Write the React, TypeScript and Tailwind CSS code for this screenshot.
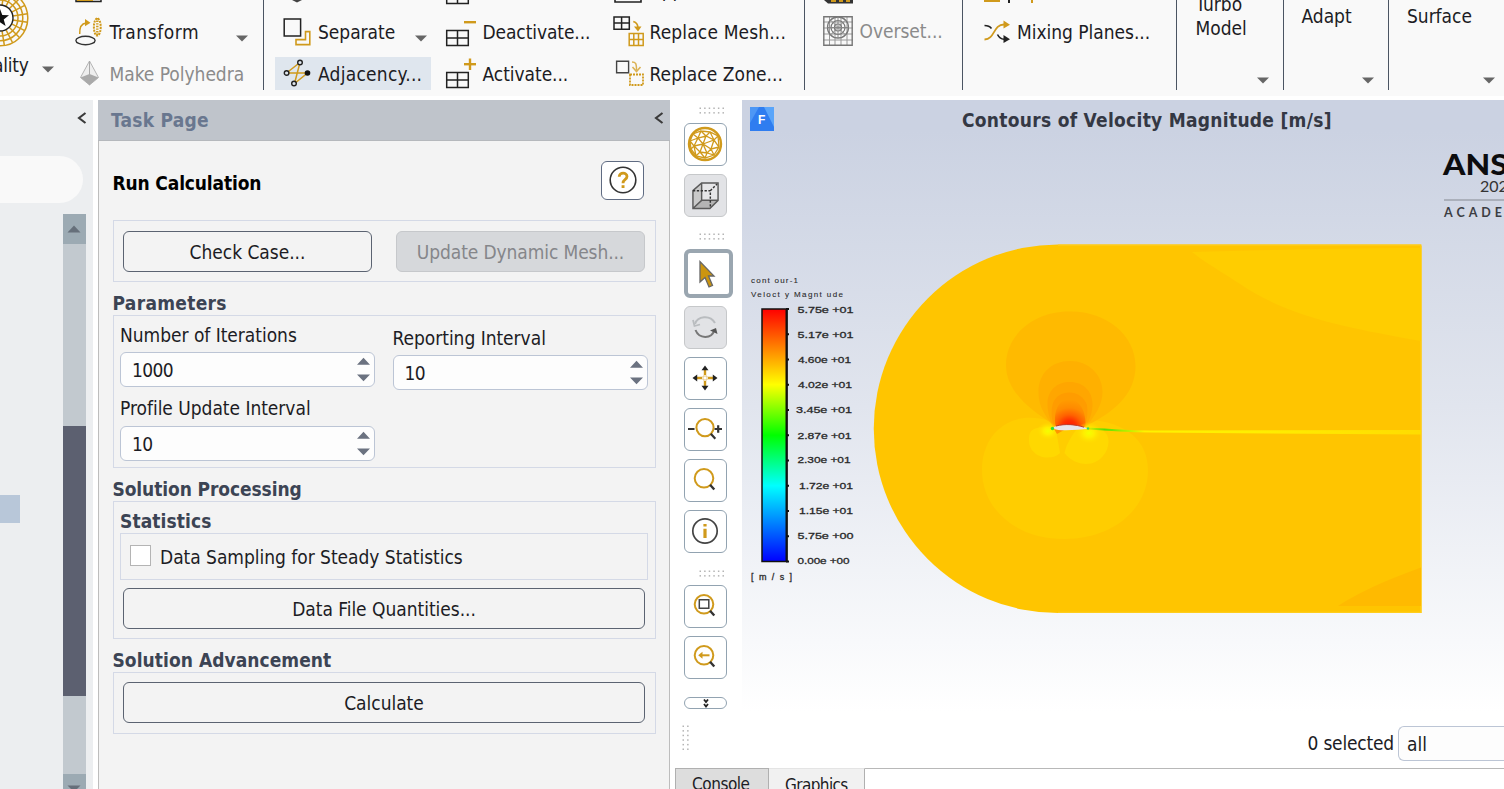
import React from "react";

const GOLD = "#d09a1c";

function Caret({ className = "" }: { className?: string }) {
  return (
    <svg className={`shrink-0 ${className}`} width="12" height="7" viewBox="0 0 12 7">
      <path d="M0 0.5H12L6 6.5Z" fill="#666" />
    </svg>
  );
}

function TableIcon({ mark }: { mark?: "plus" | "minus" }) {
  return (
    <svg width="32" height="32" viewBox="0 0 32 32" fill="none">
      <path d="M1.7 14.5H23.3V29.5H1.7ZM12.5 14.5V29.5M1.7 22H23.3" stroke="#222" strokeWidth="1.5" />
      {mark && <path d="M19 6.2H31" stroke={GOLD} strokeWidth="2.4" />}
      {mark === "plus" && <path d="M25 0.5V12" stroke={GOLD} strokeWidth="2.4" />}
    </svg>
  );
}

function QualityIcon() {
  return (
    <svg width="60" height="60" viewBox="-30 -30 60 60" fill="none" className="shrink-0">
      <g stroke={GOLD} strokeWidth="1.5">
        <circle r="27.8" />
        <circle r="22.8" />
        <circle r="18" />
        {Array.from({ length: 20 }, (_, i) => (
          <path key={i} d="M13 0H27.8" transform={`rotate(${i * 18 + 9})`} />
        ))}
      </g>
      <circle r="13" fill="#fff" stroke="#222" strokeWidth="1.4" />
      <path d="M0-9L2.3-3L9-2.7L3.7 1.5L5.6 8L0 4.3L-5.6 8L-3.7 1.5L-9-2.7L-2.3-3Z" fill="#111" />
    </svg>
  );
}

function TransformIcon() {
  return (
    <svg width="28" height="30" viewBox="0 0 28 30" fill="none">
      <ellipse cx="10.5" cy="23.5" rx="9.6" ry="4.2" stroke="#333" strokeWidth="1.4" />
      <path d="M4.7 17C4.5 11 6.500 6.500 11 6" stroke={GOLD} strokeWidth="1.5" />
      <path d="M10 2L15.5 5.8L10 9.2Z" fill={GOLD} />
      <ellipse cx="22.3" cy="10" rx="3.4" ry="8.6" stroke={GOLD} strokeWidth="2" strokeDasharray="2 1" />
      <path d="M22.3 1V19" stroke={GOLD} strokeWidth="2.4" strokeDasharray="1.4 1.2" />
    </svg>
  );
}

function PolyIcon() {
  return (
    <svg width="28" height="30" viewBox="0 0 28 30">
      <path d="M14.5 2L5.5 18.500L14.5 26L23.5 18.500Z" fill="#eee" stroke="#b5b5b5" />
      <path d="M5.5 18.500L14.5 15L23.5 18.500L14.5 26Z" fill="#aaa" />
      <path d="M14.5 2V26" stroke="#aaa" />
    </svg>
  );
}

function SeparateIcon() {
  return (
    <svg width="30" height="30" viewBox="0 0 30 30" fill="none">
      <path d="M1.2 2H17.600V19H1.2Z" stroke="#222" strokeWidth="1.5" />
      <path d="M22.500 14.600H26.800V27.600H13V22.600H22.500Z" stroke={GOLD} strokeWidth="1.6" />
    </svg>
  );
}

function AdjacencyIcon() {
  return (
    <svg width="30" height="30" viewBox="0 0 30 30" fill="none">
      <path d="M3.5 14L17 3.500L11.5 24.500L24.5 14H3.5" stroke={GOLD} strokeWidth="1.5" />
      <g fill="#dfe6ee" stroke="#222" strokeWidth="1.4">
        <circle cx="3.6" cy="14" r="2.3" />
        <circle cx="17" cy="3.500" r="2.3" />
        <circle cx="11" cy="24.500" r="2.3" />
      </g>
      <circle cx="24.5" cy="14" r="2.8" fill="#111" />
    </svg>
  );
}

function ReplaceMeshIcon() {
  return (
    <svg width="32" height="32" viewBox="0 0 32 32" fill="none">
      <path d="M1 1H16.3V13.3H1ZM8.6 1V13.3M1 7H16.3" stroke="#222" strokeWidth="1.5" />
      <path d="M16.2 17.5H30.2V29.5H16.2ZM20.8 17.5V29.5M25.5 17.5V29.5M16.2 23.5H30.2" stroke={GOLD} strokeWidth="1.5" />
      <path d="M20.3 5.5C23.5 6.5 25 8.5 25 12" stroke={GOLD} strokeWidth="1.7" />
      <path d="M21 10.5L25 15.5L28.5 10.5Z" fill={GOLD} />
    </svg>
  );
}

function ReplaceZoneIcon() {
  return (
    <svg width="32" height="32" viewBox="0 0 32 32" fill="none">
      <path d="M3.6 5.2H15.6V16.7H3.6Z" stroke="#444" strokeWidth="1.4" />
      <path d="M17 18.500H30V29H17Z" stroke={GOLD} strokeWidth="1.8" strokeDasharray="2 1" />
      <path d="M19 6C22.5 6 23.5 7 23.5 14" stroke="#dbb254" strokeWidth="1.5" />
      <path d="M19.5 11L23.5 15.5L27.5 11" stroke="#dbb254" strokeWidth="1.6" />
    </svg>
  );
}

function OversetIcon() {
  return (
    <svg width="30" height="30" viewBox="0 0 30 30" fill="none">
      <g stroke="#999" strokeWidth="1">
        <path d="M6.5 0V30M12 0V30M18 0V30M24 0V30M0 6H30M0 12H30M0 18H30M0 24H30" />
      </g>
      <path d="M0.8 0.8H29.2V29.2H0.8Z" stroke="#777" strokeWidth="1.4" />
      <circle cx="15" cy="11.5" r="10.5" stroke="#777" strokeWidth="1.3" />
      <circle cx="15" cy="11.5" r="7" stroke="#777" strokeWidth="1.2" />
      <circle cx="15" cy="11.5" r="3.5" stroke="#777" strokeWidth="1.2" />
      <path d="M7.5 4L22.5 19M22.5 4L7.5 19M15 1V22M4.5 11.5H25.5" stroke="#888" />
    </svg>
  );
}

function MixingIcon() {
  return (
    <svg width="28" height="28" viewBox="0 0 28 28" fill="none">
      <path d="M0.5 21.5C11 21.5 9 6.5 20 6.5" stroke={GOLD} strokeWidth="1.8" />
      <path d="M19.5 2.5L26 6.8L19.5 10.5Z" fill={GOLD} />
      <path d="M0.5 7.5C4 7.5 6 8.5 7.5 10.5M13.5 16.5C15 19.5 17 21 20 21.3" stroke="#222" strokeWidth="1.6" />
      <path d="M19.5 17L26 21.3L19.5 25Z" fill="#222" />
    </svg>
  );
}

function RibbonItem({
  icon,
  label,
  iconClass,
  labelClass = "",
  className = "",
  caret,
}: {
  icon: React.ReactNode;
  label: string;
  iconClass: string;
  labelClass?: string;
  className?: string;
  caret?: string;
}) {
  return (
    <div className={`flex h-[42px] shrink-0 items-center ${className}`}>
      <span className={`flex shrink-0 ${iconClass}`}>{icon}</span>
      <span className={`whitespace-nowrap ${labelClass}`}>{label}</span>
      {caret && <Caret className={`mt-[13px] ${caret}`} />}
    </div>
  );
}

function BigItem({ lines, className, caret }: { lines: string[]; className: string; caret: string }) {
  return (
    <div className={`flex h-[90px] shrink-0 flex-col justify-between border-l border-[#4b5563] ${className}`}>
      <div className="flex flex-col">
        {lines.map((l) => (
          <span key={l} className="h-6 leading-6">
            {l}
          </span>
        ))}
      </div>
      <Caret className={`mb-[6px] ${caret}`} />
    </div>
  );
}

function Ribbon() {
  return (
    <header className="flex h-[96px] shrink-0 overflow-hidden bg-[#f9f9f9]">
      <div className="flex w-[75px] shrink-0 flex-col overflow-hidden">
        <div className="-mt-[12px] -ml-[30px]">
          <QualityIcon />
        </div>
        <div className="mt-[5px] flex items-center">
          <span className="-ml-[7px] leading-6 tracking-[-0.2px]">ality</span>
          <Caret className="ml-[13px] mt-[9px]" />
        </div>
      </div>

      <div className="flex h-[95px] w-[188px] shrink-0 flex-col justify-end overflow-hidden">
        <RibbonItem
          icon={
            <svg width="28" height="28" viewBox="0 0 28 28">
              <path d="M1 4H26V25.5H1Z" fill="#fff" stroke="#222" strokeWidth="1.5" />
              <path d="M2 20H18V25H2Z" fill={GOLD} />
            </svg>
          }
          iconClass="w-[35px]"
          label=""
        />
        <RibbonItem icon={<TransformIcon />} iconClass="w-[34.5px]" label="Transform" labelClass="tracking-[0.55px]" caret="ml-[37px]" />
        <RibbonItem icon={<PolyIcon />} iconClass="w-[34.5px]" label="Make Polyhedra" className="text-[#8b8b8b]" />
      </div>

      <div className="flex h-[90px] w-[168px] shrink-0 flex-col overflow-hidden border-l border-[#4b5563]">
        <div className="h-[11px] pl-[27px]">
          <svg width="12" height="3" viewBox="0 0 12 3">
            <path d="M1 0H11L6 2.5Z" fill="#444" />
          </svg>
        </div>
        <RibbonItem
          icon={<SeparateIcon />}
          iconClass="w-[35px]"
          className="pl-[19px]"
          label="Separate"
          caret="ml-[20px]"
        />
        <div className="mt-1 ml-[11px] flex h-[33px] w-[156px] shrink-0 items-center bg-[#dfe6ee] pl-[8px]">
          <span className="flex w-[35px] shrink-0">
            <AdjacencyIcon />
          </span>
          <span className="tracking-[0.25px]">Adjacency...</span>
        </div>
      </div>

      <div className="flex h-[95px] w-[167px] shrink-0 flex-col justify-end overflow-hidden pl-[14px]">
        <RibbonItem icon={<TableIcon />} iconClass="w-[37.5px]" label="" />
        <RibbonItem icon={<TableIcon mark="minus" />} iconClass="mt-[-1px] w-[37.5px]" label="Deactivate..." labelClass="tracking-[-0.1px]" />
        <RibbonItem icon={<TableIcon mark="plus" />} iconClass="w-[37.5px]" label="Activate..." labelClass="tracking-[-0.05px]" />
      </div>

      <div className="flex h-[95px] w-[206px] shrink-0 flex-col justify-end overflow-hidden pl-[15px]">
        <RibbonItem
          icon={
            <svg width="30" height="24" viewBox="0 0 30 24">
              <path d="M2 2H28V21H2Z" fill="none" stroke="#222" strokeWidth="1.6" />
            </svg>
          }
          iconClass="mt-[5px] w-[37px]"
          label="Append..."
        />
        <RibbonItem icon={<ReplaceMeshIcon />} iconClass="mt-[-1px] w-[36.5px]" label="Replace Mesh..." labelClass="tracking-[0.15px]" />
        <RibbonItem icon={<ReplaceZoneIcon />} iconClass="mt-[-5px] w-[36.5px]" label="Replace Zone..." labelClass="tracking-[0.05px]" />
      </div>

      <div className="flex h-[90px] w-[158px] shrink-0 flex-col border-l border-[#4b5563] pl-[18px]">
        <div className="h-[10px]">
          <svg width="32" height="5" viewBox="0 0 32 5">
            <path d="M1 0H30V3.5H5Z" fill="#333" />
            <path d="M8 0H13V2H8ZM16 0H20V2H16ZM23 0H27V2H23Z" fill={GOLD} />
          </svg>
        </div>
        <RibbonItem icon={<OversetIcon />} iconClass="w-[36.5px]" label="Overset..." className="text-[#8b8b8b]" />
      </div>

      <div className="flex h-[90px] w-[214px] shrink-0 flex-col border-l border-[#4b5563] pl-[21px]">
        <div className="h-[11px]">
          <svg width="60" height="5" viewBox="0 0 60 5">
            <path d="M0 0H16V2H0Z" fill={GOLD} />
            <path d="M24 0H26V3H24Z" fill="#222" />
            <path d="M47 0H49V3H47Z" fill={GOLD} />
          </svg>
        </div>
        <RibbonItem icon={<MixingIcon />} iconClass="w-[33px]" label="Mixing Planes..." />
      </div>

      <BigItem lines={["Turbo", "Model"]} className="w-[107px] pl-[18.5px] [&>div]:-mt-[8px]" caret="ml-[61px]" />
      <BigItem lines={["Adapt"]} className="w-[105px] pl-[17.5px] [&>div]:mt-[4px]" caret="ml-[60px]" />
      <BigItem lines={["Surface"]} className="w-[120px] pl-[18px] [&>div]:mt-[4px]" caret="ml-[76px]" />
    </header>
  );
}

function ChevronLeft() {
  return (
    <svg width="10" height="12" viewBox="0 0 10 12" fill="none">
      <path d="M8.5 1L2 6L8.5 11" stroke="#3a3a3a" strokeWidth="2.1" />
    </svg>
  );
}

function Outline() {
  return (
    <aside className="flex w-[93px] shrink-0 flex-col bg-[#eceef0]">
      <div className="flex h-[56px] justify-end pr-[6px] pt-[12px]">
        <ChevronLeft />
      </div>
      <div className="h-[47px] w-[83px] shrink-0 rounded-r-full bg-[#f9f9f9]" />
      <div className="mt-[11px] flex min-h-0 flex-1">
        <div className="w-[63px] pt-[281px]">
          <div className="h-7 w-[19.5px] bg-[#b8c7d9]" />
        </div>
        <div className="flex w-[22.5px] flex-col bg-[#c2c9cf]">
          <div className="flex h-[30px] items-center justify-center bg-[#9caab3]">
            <svg width="14" height="8" viewBox="0 0 14 8">
              <path d="M0.5 7.5L7 0.5L13.5 7.5Z" fill="#666f7a" />
            </svg>
          </div>
          <div className="mt-[182px] h-[270px] bg-[#5c6070]" />
          <div className="mt-[78px] flex flex-1 items-end justify-center bg-[#9caab3]">
            <svg width="14" height="4" viewBox="0 0 14 4">
              <path d="M0.5 0.5H13.5L10 4H4Z" fill="#666f7a" />
            </svg>
          </div>
        </div>
      </div>
    </aside>
  );
}

function Spin({ value }: { value: string }) {
  return (
    <div className="flex h-[35px] w-[255px] items-center justify-between rounded-[6px] border-[1.5px] border-[#bcc5d5] bg-[#fdfdfd] pl-[11px] pr-[4px]">
      <span className="pt-[1px] tracking-[-0.6px]">{value}</span>
      <svg width="13" height="25" viewBox="0 0 13 25">
        <path d="M0 7.8L6.5 0.8L13 7.8ZM0 17.5H13L6.5 24.2Z" fill="#6b7280" />
      </svg>
    </div>
  );
}

function PushButton({ label, className = "" }: { label: string; className?: string }) {
  return (
    <div className={`flex h-[41px] items-center justify-center rounded-[6px] border-[1.5px] pt-[1px] ${className}`}>
      {label}
    </div>
  );
}

function Heading({ children, className = "" }: { children: React.ReactNode; className?: string }) {
  return <h3 className={`font-bold leading-6 whitespace-nowrap text-[#3c4454] ${className}`}>{children}</h3>;
}

function TaskPage() {
  return (
    <section className="ml-[5px] flex w-[572px] shrink-0 flex-col border-x border-[#bdbdbd] bg-[#f3f3f3]">
      <div className="-mx-px flex h-[41px] shrink-0 items-center justify-between border-b border-[#b5b8bc] bg-[#bfc4cb] pl-[13px] pr-[6px]">
        <span className="font-bold tracking-[0.25px] text-[#69778f]">Task Page</span>
        <span className="mb-1">
          <ChevronLeft />
        </span>
      </div>
      <div className="flex flex-col pl-[13.5px] pr-[13.5px]">
        <div className="mt-[19px] flex h-10 items-center justify-between pr-[11.5px]">
          <h2 className="pt-[6px] font-bold tracking-[-0.15px] text-black">Run Calculation</h2>
          <div className="flex h-[39px] w-[43px] items-center justify-center rounded-[6px] border-[1.5px] border-[#5f6b82] bg-white">
            <svg width="28" height="28" viewBox="0 0 28 28" fill="none">
              <circle cx="14" cy="14" r="12.8" stroke="#333" strokeWidth="1.6" />
              <path d="M10.2 10.8C10.2 6 18 6 18 10.6C18 13.6 14 13.2 14 17.3" stroke={GOLD} strokeWidth="2.8" />
              <path d="M12.6 19.2H15.5V22H12.6Z" fill={GOLD} />
            </svg>
          </div>
        </div>

        <div className="mt-[20px] flex h-[62px] justify-between border-[1.5px] border-[#d4d9e6] px-[9.5px] pt-[9.5px]">
          <PushButton label="Check Case..." className="w-[249px] border-[#5b6371]" />
          <PushButton
            label="Update Dynamic Mesh..."
            className="w-[249px] border-[#c6c8cb] bg-[#d6d8db] tracking-[-0.1px] text-[#85868a]"
          />
        </div>

        <Heading className="mt-[9px] tracking-[0.3px]">Parameters</Heading>
        <div className="flex h-[153px] justify-between border-[1.5px] border-[#d4d9e6] pr-[7px] pl-[6.5px]">
          <div className="flex flex-col">
            <span className="mt-[7px] leading-6">Number of Iterations</span>
            <div className="mt-[5px]">
              <Spin value="1000" />
            </div>
            <span className="mt-[9px] leading-6">Profile Update Interval</span>
            <div className="mt-[6px]">
              <Spin value="10" />
            </div>
          </div>
          <div className="flex flex-col">
            <span className="mt-[10px] leading-6">Reporting Interval</span>
            <div className="mt-[5px]">
              <Spin value="10" />
            </div>
          </div>
        </div>

        <Heading className="mt-[9px] tracking-[-0.1px]">Solution Processing</Heading>
        <div className="flex h-[138px] flex-col border-[1.5px] border-[#d4d9e6] px-[6.5px]">
          <Heading className="mt-[7px] tracking-[0.1px]">Statistics</Heading>
          <div className="flex h-[47px] items-center gap-[9px] border-[1.5px] border-[#d4d9e6] pl-[9px]">
            <span className="mb-[3px] h-[21px] w-[21px] border-[1.5px] border-[#b4b4b4] bg-white" />
            <span className="pt-[1px]">Data Sampling for Steady Statistics</span>
          </div>
          <PushButton label="Data File Quantities..." className="mx-[3px] mt-[8px] border-[#5b6371]" />
        </div>

        <Heading className="mt-[9px] tracking-[0.05px]">Solution Advancement</Heading>
        <div className="flex h-[62px] flex-col border-[1.5px] border-[#d4d9e6] px-[9.5px] pt-[9px]">
          <PushButton label="Calculate" className="border-[#5b6371]" />
        </div>
      </div>
    </section>
  );
}

function Grip({ vertical = false }: { vertical?: boolean }) {
  const w = vertical ? 2 : 6;
  const h = vertical ? 6 : 2;
  return (
    <svg width={w * 4.6} height={h * 4.6} viewBox={`0 0 ${w * 4.6} ${h * 4.6}`} className="shrink-0">
      {Array.from({ length: w * h }, (_, i) => (
        <rect key={i} x={(i % w) * 4.6 + 0.5} y={Math.floor(i / w) * 4.6 + 0.5} width="1.5" height="1.5" fill="#b4b4b4" />
      ))}
    </svg>
  );
}

function Tool({ children, className = "", disabled = false }: { children: React.ReactNode; className?: string; disabled?: boolean }) {
  return (
    <div
      className={`flex h-[43px] w-[43px] shrink-0 items-center justify-center rounded-[6px] border-[1.5px] pr-px pb-px ${
        disabled ? "border-[#c6c8ca] bg-[#e2e3e6]" : "border-[#92a3b1] bg-white"
      } ${className}`}
    >
      {children}
    </div>
  );
}

function Lens({ children }: { children?: React.ReactNode }) {
  return (
    <svg width="40" height="40" viewBox="0 0 40 40" fill="none" className="shrink-0">
      <circle cx="19" cy="18.3" r="9.3" stroke={GOLD} strokeWidth="2" />
      <path d="M25 24.800L29.3 29.5" stroke="#333" strokeWidth="2.4" />
      {children}
    </svg>
  );
}

function Toolbar() {
  return (
    <div className="flex h-[612px] w-[72px] shrink-0 flex-col pl-[14px]">
      <div className="mt-[7px] h-4 pl-[14.5px]">
        <Grip />
      </div>
      <Tool>
        <svg width="36" height="36" viewBox="-18 -18 36 36" fill="none" stroke={GOLD}>
          <circle r="16" strokeWidth="2.4" />
          <path
            d="M-12-10L-4-13L5-12L13-8L14 3L9 11L0 14L-9 12L-14 5L-15-3L-12-10L-7-6L-4-13L1-8L5-12L9-4L13-8M-15-3L-7-6L1-8L9-4L14 3L6 5L9 11L2 9L0 14L-5 8L-9 12L-11 2L-14 5M-11 2L-15-3M-11 2L-7-6L-2 0L1-8M-2 0L9-4L6 5L-2 0L-11 2L-5 8L-2 0L2 9L6 5M-5 8L2 9"
            strokeWidth="1.3"
          />
        </svg>
      </Tool>
      <Tool className="mt-2" disabled>
        <svg width="29" height="29" viewBox="0 0 30 30" fill="none">
          <path d="M2 10L11 2V20L2 28.5Z" fill="#c9c9c9" />
          <path d="M2 28.5L11 20H28L20 28.5Z" fill="#b4b4b4" />
          <path d="M11 2H28V20H11Z" fill="#e6e6e8" />
          <path d="M2 10L11 2H28V20L19.5 28.5H2ZM11 2V20L2 28.5M11 20H28" stroke="#5a5a5a" strokeWidth="1.5" />
          <path d="M2 10H20V28M20 10L27 3" stroke="#333" strokeWidth="1.5" strokeDasharray="2.4 1.6" />
        </svg>
      </Tool>
      <div className="mt-[16px] h-4 pl-[14.5px]">
        <Grip />
      </div>
      <div className="flex h-[49px] w-[49px] shrink-0 items-center justify-center rounded-[6px] border-[4.5px] border-[#9aa6b0] bg-white pr-px">
        <svg width="20" height="30" viewBox="0 0 20 30">
          <path d="M2 2.5V23L7 18.5L11 28L14.5 26.5L10.5 17H16Z" fill="#cc950f" stroke="#666" strokeWidth="1.3" />
        </svg>
      </div>
      <Tool className="mt-2" disabled>
        <svg width="28" height="28" viewBox="0 0 28 28" fill="none">
          <path d="M4 11C6.5 3 19 1.5 24 10" stroke="#b9bcbf" strokeWidth="2" />
          <path d="M2 7L3.5 13L9 11.5" stroke="#b9bcbf" strokeWidth="1.8" />
          <path d="M4.5 17C8 26 20.5 26.5 23.5 17" stroke="#777" strokeWidth="2" />
          <path d="M19 17.5L25 15L26.5 21Z" fill="#555" />
        </svg>
      </Tool>
      <Tool className="mt-2">
        <svg width="28" height="28" viewBox="0 0 28 28" fill="none">
          <path d="M14 5V11M14 17V23M5 14H11M17 14H23" stroke={GOLD} strokeWidth="2.4" />
          <path d="M12 12H16V16H12Z" stroke="#e3c27b" />
          <path d="M10.5 6.2L14 1.5L17.5 6.2ZM10.5 21.8L14 26.5L17.5 21.8ZM6.2 10.5L1.5 14L6.2 17.5ZM21.8 10.5L26.5 14L21.8 17.5Z" fill="#222" />
        </svg>
      </Tool>
      <Tool className="mt-2">
        <svg width="40" height="40" viewBox="0 0 40 40" fill="none" className="shrink-0">
          <circle cx="20" cy="18.6" r="8.6" stroke={GOLD} strokeWidth="2" />
          <path d="M25.8 24.8L30.300 29.8M3 20H9.500M29.500 20H37M33.2 16.300V23.8" stroke="#333" strokeWidth="2.2" />
        </svg>
      </Tool>
      <Tool className="mt-2">
        <Lens />
      </Tool>
      <Tool className="mt-2">
        <svg width="28" height="28" viewBox="0 0 28 28" fill="none">
          <circle cx="14" cy="14" r="12.2" stroke="#444" strokeWidth="1.7" />
          <path d="M12.4 11.8H15.6V21H12.4ZM12.4 7H15.6V9.6H12.4Z" fill={GOLD} />
        </svg>
      </Tool>
      <div className="mt-[17px] h-[15px] pl-[14.5px]">
        <Grip />
      </div>
      <Tool>
        <Lens>
          <path d="M14.300 13.8H23.8V22.300H14.300Z" stroke="#444" strokeWidth="1.5" />
        </Lens>
      </Tool>
      <Tool className="mt-2">
        <Lens>
          <path d="M15 18.3H24.500" stroke={GOLD} strokeWidth="2" />
          <path d="M17.5 14.8L13.200 18.3L17.5 21.8Z" fill={GOLD} />
        </Lens>
      </Tool>
      <div className="mt-[18px] flex h-[12px] w-[43px] shrink-0 items-center justify-center rounded-full border-[1.5px] border-[#92a3b1] bg-white">
        <svg width="6" height="9" viewBox="0 0 6 9" fill="none" stroke="#222" strokeWidth="1.8">
          <path d="M1 0.5L3 3L5 0.5M1 5L3 7.5L5 5" />
        </svg>
      </div>
    </div>
  );
}

const LEGEND: [string, number, number, number][] = [
  ["5.75e +01", 797.5, 310, 56],
  ["5.17e +01", 797.5, 335, 56],
  ["4.60e +01", 798, 359.5, 53],
  ["4.02e +01", 798, 384.5, 54],
  ["3.45e +01", 796, 410, 56],
  ["2.87e +01", 797.5, 435.5, 54],
  ["2.30e +01", 797.5, 460, 53],
  ["1.72e +01", 799, 485.5, 54],
  ["1.15e +01", 799, 511, 54],
  ["5.75e +00", 797.5, 536, 56],
  ["0.00e +00", 797.5, 560.5, 52],
];

function ContourPlot() {
  return (
    <svg width="762" height="572" viewBox="742 140 762 572" className="shrink-0">
      <defs>
        <linearGradient id="scale" x1="0" y1="0" x2="0" y2="1">
          <stop offset="0" stopColor="#f00" />
          <stop offset="0.3" stopColor="#ff0" />
          <stop offset="0.5" stopColor="#0f0" />
          <stop offset="0.7" stopColor="#0ff" />
          <stop offset="1" stopColor="#00f" />
        </linearGradient>
        <linearGradient id="wake" gradientUnits="userSpaceOnUse" x1="1088" y1="0" x2="1421" y2="0">
          <stop offset="0" stopColor="#e8e800" />
          <stop offset="0.05" stopColor="#58e000" />
          <stop offset="0.1" stopColor="#a0ec00" />
          <stop offset="0.17" stopColor="#fff200" />
          <stop offset="0.5" stopColor="#ffee00" />
          <stop offset="1" stopColor="#ffdc00" />
        </linearGradient>
        <radialGradient id="nose">
          <stop offset="0" stopColor="#f4ff00" />
          <stop offset="0.4" stopColor="#ffee00" />
          <stop offset="1" stopColor="#ffdc00" stopOpacity="0" />
        </radialGradient>
        <radialGradient id="hot" cx="0.47" cy="0.97" r="0.95">
          <stop offset="0" stopColor="#ff1400" />
          <stop offset="0.25" stopColor="#ff3000" />
          <stop offset="0.45" stopColor="#ff6200" />
          <stop offset="0.7" stopColor="#ff8a00" />
          <stop offset="1" stopColor="#ff9c00" />
        </radialGradient>
      </defs>

      <path d="M1058 244.5H1421.5V613H1058A184.25 184.25 0 0 1 1058 244.5Z" fill="#ffc500" />
      <path d="M1421 246V613M1421 245.2H1058M1421 612.4H1058" stroke="#ffcd1c" strokeWidth="1.2" fill="none" />
      <path d="M1192 252C1250 251 1320 248 1421 248V341C1350 328 1290 318 1240 284C1222 272 1207 264 1192 252Z" fill="#ffcd00" />
      <path d="M1338 606C1362 590 1400 575 1421 567.5V606Z" fill="#ffba00" />

      <path d="M1052 422C1015 408 982 430 982 470C982 510 1017 539 1064 539C1112 539 1148 510 1148 470C1148 440 1125 422 1090 420Z" fill="#ffcd00" />
      <path d="M1053 424C1030 410 1006 391 1006 365C1006 334 1035 311 1070 311.5C1106 311 1135.5 335 1135.5 366C1135.5 395 1113 412 1088 425Z" fill="#ffba00" />
      <path d="M1053 426C1046 416 1038.5 408 1038.5 392C1038.5 373 1052 361 1070 361C1088 361 1102.500 374 1102.500 392C1102.500 406 1094 416 1087 426Z" fill="#ffb000" />
      <path d="M1053 426C1050 420 1047.500 412 1047.500 404C1047.500 390 1057 382 1070 382C1083 382 1092.500 391 1092.500 404C1092.500 414 1089 420 1086 426Z" fill="#ffa600" />
      <path d="M1054 427C1051 417 1051 410 1053 403C1056 396 1062 392.500 1069 392.500C1077 392.500 1084 397 1087 405C1088 412 1087 420 1085 427Z" fill="#ff9c00" />
      <path d="M1056 428C1053 416 1056 400 1069 399C1082 400 1087 416 1085 428Z" fill="url(#hot)" />

      <path d="M1052 428C1030 425 1029 433 1029 440C1029 452 1039 457.500 1047 457.500C1053 457.500 1057 456 1060 453L1056 430Z" fill="#ffd800" />
      <path d="M1076 430C1069 440 1066 446 1064.500 453C1070 460 1078 464 1086 464C1099 464 1108.500 453 1108.500 441C1108.500 432 1100 427 1090 427Z" fill="#ffd800" />
      <ellipse cx="1048" cy="431" rx="11" ry="9" fill="url(#nose)" />
      <ellipse cx="1089" cy="433" rx="13" ry="11" fill="url(#nose)" />
      <path d="M1088 427.500C1110 429 1130 430.500 1150 430.500L1421 430V434.500L1150 432.500C1130 432.500 1110 431 1088 429.500Z" fill="url(#wake)" />
      <path d="M1054 429L1064 430L1057 434Z" fill="#ff9500" />
      <path d="M1052 428.500C1057 423.500 1076 423.500 1089 428.800C1078 429.500 1062 432 1052 428.500Z" fill="#e8e4ea" />
      <path d="M1056 426C1065 423.500 1076 424.500 1084 427.200" stroke="#c03a28" fill="none" />
      <circle cx="1052.500" cy="428.500" r="1.700" fill="#30e030" />
      <circle cx="1088" cy="428.500" r="1.300" fill="#30d860" />

      <g fontFamily="'Liberation Sans', sans-serif" fontSize="9" fill="#2a2a2a" stroke="#2a2a2a" strokeWidth="0.3">
        <text x="751" y="283" fontSize="8" textLength="47" strokeWidth="0.1">
          cont our-1
        </text>
        <text x="751" y="296.500" fontSize="8" textLength="92" strokeWidth="0.1">
          Veloct y Magnt ude
        </text>
        {LEGEND.map(([label, x, y, w]) => (
          <text key={y} x={x} y={y + 3} textLength={w} lengthAdjust="spacingAndGlyphs">
            {label}
          </text>
        ))}
        <text x="751" y="579.500" textLength="41">
          [ m / s ]
        </text>
      </g>
      <rect x="762" y="309" width="25" height="252.500" fill="url(#scale)" stroke="#111" strokeWidth="1.500" />
      <path d="M786.500 309V562" stroke="#111" strokeWidth="2" />
      {LEGEND.map((_, i) => (
        <path key={i} d={`M786 ${309 + i * 25.25}H789`} stroke="#111" strokeWidth="2" />
      ))}

      <text
        x="1443"
        y="175"
        fontFamily="Lato, sans-serif"
        fontWeight="900"
        fontSize="28.500"
        textLength="102"
        lengthAdjust="spacingAndGlyphs"
        letterSpacing="0"
        fill="#0c0c0e"
      >
        ANSYS
      </text>
      <text x="1480" y="192" fontFamily="Lato, sans-serif" fontSize="16" letterSpacing="0" fill="#333">
        202
      </text>
      <path d="M1444 200H1504" stroke="#9ea3ad" strokeWidth="1.500" />
      <text x="1444" y="217" fontFamily="Lato, sans-serif" fontWeight="700" fontSize="12.500" letterSpacing="4" fill="#3c3e44">
        ACADEMIC
      </text>
    </svg>
  );
}

function Viewer() {
  return (
    <main className="flex min-w-0 flex-1 flex-col bg-white">
      <div className="flex h-[612px] shrink-0">
        <Toolbar />
        <div className="flex min-w-0 flex-1 flex-col overflow-hidden bg-linear-to-b from-[#cbd2e2] from-5% via-[#e1e5ee] via-50% to-white">
          <div className="flex h-10 shrink-0 items-center pl-[8px]">
            <svg width="24" height="24" viewBox="0 0 24 24" className="mb-[3px]">
              <rect width="24" height="24" fill="#2f7df0" />
              <path d="M0 0H9L0 16Z" fill="#4d97f5" />
              <path d="M14 0H24V20Z" fill="#5aa5fa" />
              <text x="8" y="16.500" fontFamily="'Liberation Sans', sans-serif" fontWeight="700" fontSize="12" fill="#fff">
                F
              </text>
            </svg>
            <span className="ml-[188px] font-bold tracking-[0.28px] whitespace-nowrap text-[#343844]">
              Contours of Velocity Magnitude [m/s]
            </span>
          </div>
          <ContourPlot />
        </div>
      </div>
      <div className="flex h-[56px] shrink-0 items-center pl-[12px]">
        <div className="mb-0.5">
          <Grip vertical />
        </div>
        <span className="ml-auto mt-[6px] mr-[4px] tracking-[-0.2px]">0 selected</span>
        <div className="mt-[6px] flex h-[35px] w-[106px] items-center rounded-l-[6px] border-[1.5px] border-r-0 border-[#bcc5d5] bg-[#fdfdfd] pt-[1px] pl-[8px]">
          all
        </div>
      </div>
      <div className="flex h-[21px] shrink-0 overflow-hidden pl-[5px]">
        <div className="w-[94px] border-x border-t border-[#b0b0b0] bg-[#dddddd] pl-[16px] pt-[3px] text-[17px] leading-6 tracking-[-0.45px]">
          Console
        </div>
        <div className="w-[96px] border-r border-t border-r-[#b0b0b0] border-t-[#e4e4e4] bg-[#f1f1f1] pl-[16px] pt-[4px] text-[17px] leading-6 tracking-[-0.6px]">
          Graphics
        </div>
        <div className="flex-1 border-t border-[#b8b8b8]" />
      </div>
    </main>
  );
}

export default function App() {
  return (
    <div className="flex h-[789px] w-[1504px] flex-col overflow-hidden bg-white font-['DejaVu_Sans_Condensed','DejaVu_Sans',sans-serif] text-[19px] leading-6 tracking-[-0.03px] text-[#1c1c24] [font-stretch:condensed]">
      <Ribbon />
      <div className="mt-1 flex min-h-0 flex-1">
        <Outline />
        <TaskPage />
        <Viewer />
      </div>
    </div>
  );
}
